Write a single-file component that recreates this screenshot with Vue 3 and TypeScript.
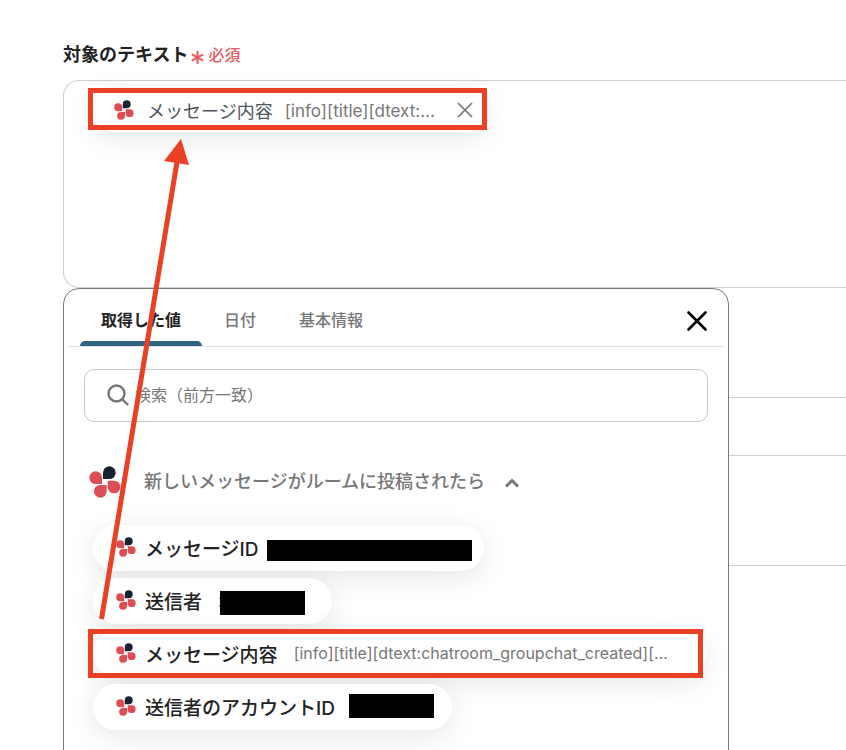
<script setup lang="ts">
import { ref } from 'vue'

interface Item {
  label: string
  value?: string
  mask?: string
}

const tabs: string[] = ['取得した値', '日付', '基本情報']
const activeTab = ref(0)
const query = ref('')
const open = ref(true)
const inserted = ref(true)

const items: Item[] = [
  { label: 'メッセージID', mask: 'wide' },
  { label: '送信者', value: '木', mask: 'over' },
  { label: 'メッセージ内容', value: '[info][title][dtext:chatroom_groupchat_created][…' },
  { label: '送信者のアカウントID', mask: 'small' },
]
</script>

<template>
  <svg class="defs" aria-hidden="true">
    <symbol id="clover" viewBox="0 0 96 96">
      <path fill="#182233" d="M42 39V20A19 19 0 1 1 61 39Z" />
      <path fill="#de4c54" d="M39 54H20A19 19 0 1 1 39 35Z" />
      <path fill="#de4c54" d="M53 57V76A19 19 0 1 1 34 57Z" />
      <path fill="#de4c54" d="M56 44H75A19 19 0 1 1 56 63Z" />
    </symbol>
  </svg>

  <main class="page">
    <h1 class="field-title">
      対象のテキスト
      <span class="required">
        <svg class="star" viewBox="0 0 13 13" aria-hidden="true">
          <path d="M6.5 0V13M0.8 3.3L12.2 9.7M12.2 3.3L0.8 9.7" />
        </svg>
        必須
      </span>
    </h1>

    <section class="field">
      <div class="editor">
        <div v-if="inserted" class="chip inserted marked">
          <svg class="logo" aria-hidden="true"><use href="#clover" /></svg>
          <span class="name">メッセージ内容</span>
          <span class="value">[info][title][dtext:…</span>
          <button class="remove" type="button" aria-label="削除" @click="inserted = false">
            <svg viewBox="0 0 16 16" aria-hidden="true"><path d="M1 1L15 15M15 1L1 15" /></svg>
          </button>
        </div>
      </div>

      <div class="panel">
        <header class="panel-head">
          <nav class="tabs" role="tablist">
            <button
              v-for="(tab, i) in tabs"
              :key="tab"
              type="button"
              role="tab"
              class="tab"
              :class="{ active: i === activeTab }"
              :aria-selected="i === activeTab"
              @click="activeTab = i"
            >{{ tab }}</button>
          </nav>
          <button class="close" type="button" aria-label="閉じる">
            <svg viewBox="0 0 20 20" aria-hidden="true"><path d="M1.5 1.5L18.5 18.5M18.5 1.5L1.5 18.5" /></svg>
          </button>
        </header>

        <label class="search">
          <svg viewBox="0 0 22 22" aria-hidden="true">
            <circle cx="9.5" cy="9.5" r="8" />
            <path d="M15.5 15.5L20.5 20.5" />
          </svg>
          <input v-model="query" type="text" aria-label="検索" placeholder="検索（前方一致）" />
        </label>

        <button class="group" type="button" :aria-expanded="open" @click="open = !open">
          <svg class="logo large" aria-hidden="true"><use href="#clover" /></svg>
          <span>新しいメッセージがルームに投稿されたら</span>
          <svg class="chevron" viewBox="0 0 16 12" aria-hidden="true"><path d="M2 9.5L8 3.5L14 9.5" /></svg>
        </button>

        <ul v-if="open" class="items">
          <li v-for="item in items" :key="item.label">
            <button type="button" class="chip" :class="{ marked: item.label === 'メッセージ内容' }">
              <svg class="logo" aria-hidden="true"><use href="#clover" /></svg>
              <span class="name">{{ item.label }}</span>
              <span v-if="item.value" class="value">{{ item.value }}</span>
              <span v-if="item.mask" class="mask" :class="item.mask"></span>
            </button>
          </li>
        </ul>
      </div>
    </section>

    <div class="row first"></div>
    <div class="row second"></div>
    <div class="row third"></div>

    <svg class="arrow" viewBox="0 0 100 490" aria-hidden="true">
      <path class="shaft" d="M16.5 484L92 27" />
      <path class="head" d="M96 4L104 30L79 26Z" />
    </svg>
  </main>
</template>

<style>
body {
  margin: 0;
  background: #fff;
}
</style>

<style scoped>
.page {
  position: relative;
  box-sizing: border-box;
  height: 100vh;
  padding: 41px 0 0 63px;
  overflow: hidden;
  font-family: Inter, "Noto Sans CJK JP", sans-serif;
  font-size: 16px;
  color: #222;
}
.defs {
  position: absolute;
  width: 0;
  height: 0;
}
button {
  margin: 0;
  padding: 0;
  border: 0;
  background: none;
  font: inherit;
  color: inherit;
  cursor: pointer;
}
svg {
  display: block;
  flex: none;
  fill: none;
  overflow: visible;
}
.field-title {
  display: flex;
  align-items: center;
  gap: 3px;
  margin: 0 0 11px;
  font-size: 18px;
  line-height: 28px;
  font-weight: 700;
}
.required {
  display: flex;
  align-items: center;
  gap: 4px;
  font-size: 16px;
  font-weight: 500;
  color: #eb5a61;
}
.star {
  width: 13px;
  height: 13px;
  margin-top: 4px;
  stroke: currentColor;
  stroke-width: 2;
}
.field {
  position: relative;
}
.editor {
  box-sizing: border-box;
  height: 208px;
  padding: 7px 29px;
  border: 1px solid #cfcfcf;
  border-right: 0;
  border-radius: 16px 0 0 16px;
}
.chip {
  position: relative;
  display: flex;
  align-items: center;
  box-sizing: border-box;
  width: max-content;
  height: 46px;
  padding: 0 12px 2px 23px;
  border-radius: 23px;
  background: #fff;
  box-shadow: 0 6px 28px rgba(0, 0, 0, 0.1);
  white-space: nowrap;
}
.inserted {
  height: 44px;
  padding: 0 14px 0 21px;
}
.logo {
  width: 20px;
  height: 20px;
}
.logo.large {
  width: 32px;
  height: 32px;
}
.name {
  margin-left: 9px;
  font-size: 19px;
  font-weight: 500;
}
.inserted .name {
  margin-left: 13px;
  font-size: 18px;
  font-weight: 400;
  color: #50555c;
}
.value {
  margin-left: 16px;
  font-size: 16px;
  color: #777;
}
.value:last-child {
  margin-right: 26px;
}
.inserted .value {
  margin: 2px 0 0 12px;
  font-size: 17px;
}
.remove {
  margin-left: 22px;
}
.remove svg {
  width: 16px;
  height: 16px;
  stroke: #777;
  stroke-width: 1.7;
}
.marked::after {
  content: "";
  position: absolute;
  inset: -2px 3px -1px -5px;
  border: 5px solid #ea4025;
}
.inserted.marked::after {
  inset: 0 0 2px -5px;
}
.panel {
  position: absolute;
  z-index: 1;
  top: 208px;
  left: 0;
  box-sizing: border-box;
  width: 666px;
  max-width: 100%;
  height: 520px;
  padding: 0 4px;
  border: 1px solid #777;
  border-radius: 16px;
  background: #fff;
}
.panel-head {
  display: flex;
  justify-content: space-between;
  align-items: center;
  height: 57px;
  padding: 0 17px 0 12px;
  border-bottom: 1px solid #e2e2e2;
}
.tabs {
  display: flex;
  gap: 1px;
  align-self: stretch;
}
.tab {
  position: relative;
  padding: 5px 21px 0;
  line-height: 24px;
  font-weight: 500;
  color: #777;
}
.tab.active {
  color: #222;
  font-weight: 700;
}
.tab.active::after {
  content: "";
  position: absolute;
  inset: auto 0 0 0;
  height: 5px;
  border-radius: 5px 5px 0 0;
  background: #2f6580;
}
.close {
  margin-top: 6px;
}
.close svg {
  width: 20px;
  height: 20px;
  stroke: #000;
  stroke-width: 2.6;
  stroke-linecap: round;
}
.search {
  display: flex;
  align-items: center;
  gap: 6px;
  box-sizing: border-box;
  height: 53px;
  margin: 22px 16px 0;
  padding: 0 22px 2px;
  border: 1px solid #c8c8c8;
  border-radius: 10px;
}
.search svg {
  width: 22px;
  height: 22px;
  stroke: #777;
  stroke-width: 2.4;
  stroke-linecap: round;
}
.search input {
  flex: 1;
  min-width: 0;
  padding: 0;
  border: 0;
  outline: 0;
  background: none;
  font: inherit;
  color: #222;
}
.search input::placeholder {
  color: #777;
  opacity: 1;
}
.group {
  display: flex;
  align-items: center;
  margin: 44px 21px 0;
  font-size: 18px;
  line-height: 32px;
  font-weight: 500;
  color: #777;
}
.group span {
  margin: 0 19px 0 23px;
}
.chevron {
  width: 16px;
  height: 12px;
  margin-top: 2px;
  stroke: #777;
  stroke-width: 3;
}
.items {
  display: flex;
  flex-direction: column;
  gap: 7px;
  margin: 27px 25px 0;
  padding: 0;
  list-style: none;
}
.mask {
  position: relative;
  width: 85px;
  height: 24px;
  margin: 0 6px 0 14px;
  background: #000;
}
.mask.wide {
  width: 205px;
  height: 21px;
  margin: 6px 0 0 8px;
}
.mask.over {
  margin: 5px 15px 0 -14px;
}
.row {
  border-bottom: 1px solid #cfcfcf;
}
.row.first {
  height: 109px;
}
.row.second {
  height: 57px;
}
.row.third {
  height: 109px;
}
.arrow {
  position: absolute;
  z-index: 2;
  top: 135px;
  left: 85px;
  width: 100px;
  height: 490px;
  pointer-events: none;
}
.shaft {
  stroke: #ea4025;
  stroke-width: 5;
}
.head {
  fill: #ea4025;
}
</style>
